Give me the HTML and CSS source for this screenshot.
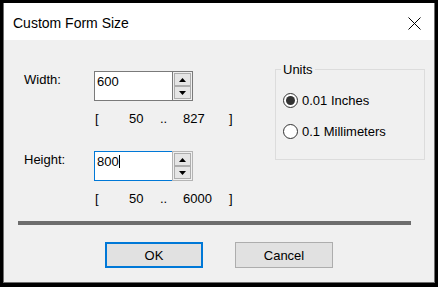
FILE: index.html
```html
<!DOCTYPE html>
<html lang="en">
<head>
    <meta charset="UTF-8">
    <title>Custom Form Size</title>
    <link rel="stylesheet" href="styles.css">
</head>
<body>
    <div class="window">
        <div class="titlebar">
            <span class="title">Custom Form Size</span>
            <svg class="close" width="13" height="13" viewBox="0 0 13 13">
                <path d="M0.5 0.5L12.5 12.5M12.5 0.5L0.5 12.5" stroke="#000" stroke-width="1" fill="none"/>
            </svg>
        </div>
        <div class="content">
            <div class="main">
                <div class="sizes">
                    <div class="row">
                        <span class="lbl">Width:</span>
                        <div class="spin">
                            <div class="field">600</div>
                            <div class="arrows">
                                <span class="arrow"><svg width="7" height="4"><path d="M0 4H7L3.5 0Z"/></svg></span>
                                <span class="arrow"><svg width="7" height="4"><path d="M0 0H7L3.5 4Z"/></svg></span>
                            </div>
                        </div>
                    </div>
                    <div class="range">
                        <span>[</span><span>50</span><span>..</span><span>827</span><span>]</span>
                    </div>

                    <div class="row row-second">
                        <span class="lbl">Height:</span>
                        <div class="spin focus">
                            <div class="field">800<span class="caret"></span></div>
                            <div class="arrows">
                                <span class="arrow"><svg width="7" height="4"><path d="M0 4H7L3.5 0Z"/></svg></span>
                                <span class="arrow"><svg width="7" height="4"><path d="M0 0H7L3.5 4Z"/></svg></span>
                            </div>
                        </div>
                    </div>
                    <div class="range">
                        <span>[</span><span>50</span><span>..</span><span>6000</span><span>]</span>
                    </div>
                </div>

                <fieldset class="units">
                    <legend>Units</legend>
                    <div class="option"><span class="radio checked"></span>0.01 Inches</div>
                    <div class="option"><span class="radio"></span>0.1 Millimeters</div>
                </fieldset>
            </div>

            <div class="separator"></div>

            <div class="buttons">
                <button class="btn btn-default">OK</button>
                <button class="btn">Cancel</button>
            </div>
        </div>
    </div>
</body>
</html>
```

FILE: styles.css
```css
html, body {
    margin: 0;
    height: 287px;
}
body {
    background-color: #000;
    padding: 3px 3px 4px 3px;
    box-sizing: border-box;
    font-family: "Liberation Sans", Arial, sans-serif;
    font-size: 13px;
    line-height: 15px;
    color: #000;
}
.window {
    width: 432px;
    height: 280px;
    box-sizing: border-box;
    border: 1px solid #6f6f6f;
    border-top: none;
    background-color: #f0f0f0;
}
.titlebar {
    display: flex;
    align-items: center;
    justify-content: space-between;
    height: 37px;
    box-sizing: border-box;
    padding: 3px 13px 0 9px;
    background-color: #fff;
}
.title {
    font-size: 14px;
}
.content {
    padding: 22px 9px 14px 20px;
}
.main {
    display: flex;
}
.sizes {
    flex: 1;
    padding-top: 9px;
}
.row {
    display: flex;
    align-items: flex-start;
}
.row-second {
    margin-top: 25px;
}
.lbl {
    width: 70px;
    margin-top: 1px;
}
.spin {
    display: flex;
    width: 99px;
    height: 30px;
}
.field {
    width: 78px;
    box-sizing: border-box;
    border: 1px solid #7a7a7a;
    border-right: none;
    background-color: #fff;
    padding: 2px 0 0 2px;
}
.spin.focus .field {
    border-color: #0078d7;
}
.caret {
    display: inline-block;
    width: 1px;
    height: 13px;
    background-color: #000;
    vertical-align: -2px;
}
.arrows {
    width: 21px;
    box-sizing: border-box;
    border: 1px solid #7a7a7a;
    padding: 1px;
    display: flex;
    flex-direction: column;
    background-color: #f0f0f0;
}
.spin.focus .arrows {
    border-color: #b4b4b4;
}
.arrow {
    flex: 1;
    display: flex;
    align-items: center;
    justify-content: center;
    border: 1px solid #adadad;
    background-color: #e5e5e5;
}
.arrow svg {
    display: block;
}
.range {
    display: grid;
    grid-template-columns: 34px 31px 23px 46px auto;
    margin: 10px 0 0 71px;
}
.units {
    width: 150px;
    box-sizing: border-box;
    margin: 0;
    padding: 16px 8px 20px 8px;
    border: 1px solid #dcdcdc;
    align-self: flex-start;
}
.units legend {
    padding: 0 2px;
    margin-left: -3px;
}
.option {
    display: flex;
    align-items: center;
}
.option + .option {
    margin-top: 16px;
}
.radio {
    width: 15px;
    height: 15px;
    box-sizing: border-box;
    border: 1px solid #333;
    border-radius: 50%;
    background-color: #fff;
    margin: 0 4px 0 -1px;
    display: flex;
    align-items: center;
    justify-content: center;
}
.radio.checked::after {
    content: "";
    width: 9px;
    height: 9px;
    border-radius: 50%;
    background-color: #333;
}
.separator {
    height: 4px;
    background-color: #6d6d6d;
    margin: 15px 14px 0 -6px;
}
.buttons {
    display: flex;
    justify-content: center;
    gap: 32px;
    margin: 17px 0 0 -11px;
}
.btn {
    width: 98px;
    height: 26px;
    box-sizing: border-box;
    border: 1px solid #adadad;
    background-color: #e1e1e1;
    font-family: "Liberation Sans", Arial, sans-serif;
    font-size: 13px;
    color: #000;
    padding: 0;
}
.btn-default {
    border: 2px solid #0078d7;
}
```
